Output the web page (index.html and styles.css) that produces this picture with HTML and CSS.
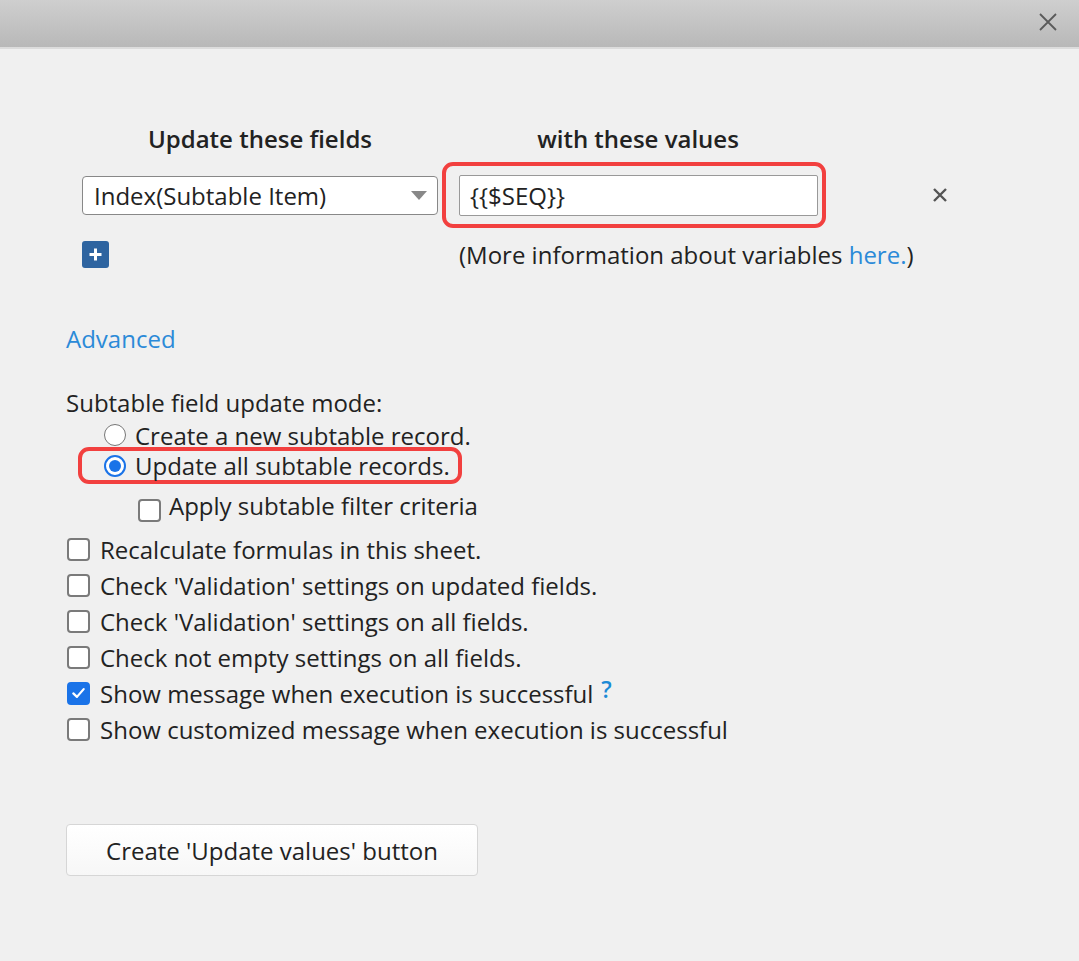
FILE: index.html
```html
<!DOCTYPE html>
<html>
<head>
<meta charset="utf-8">
<link rel="stylesheet" href="styles.css">
</head>
<body>
<div class="titlebar">
  <svg class="close" width="22" height="22" viewBox="0 0 22 22"><path d="M3 3 L19 19 M19 3 L3 19" stroke="#5a5a5a" stroke-width="1.8" fill="none"/></svg>
</div>
<div class="content">
  <div class="fields">
    <div class="heads">
      <div class="head-left">Update these fields</div>
      <div class="head-right">with these values</div>
    </div>
    <div class="row">
      <div class="select">
        <span>Index(Subtable Item)</span>
        <span class="arrow"></span>
      </div>
      <div class="highlight value-box">
        <div class="input">{{$SEQ}}</div>
      </div>
      <svg class="remove" width="16" height="16" viewBox="0 0 16 16"><path d="M2 2 L14 14 M14 2 L2 14" stroke="#555" stroke-width="2.4" fill="none"/></svg>
    </div>
    <div class="row2">
      <div class="plus"><svg width="27" height="27" viewBox="0 0 27 27"><path d="M13.5 7.5 V19.5 M7.5 13.5 H19.5" stroke="#fff" stroke-width="3" fill="none"/></svg></div>
      <div class="info">(More information about variables <span class="link">here.</span>)</div>
    </div>
  </div>

  <div class="advanced link">Advanced</div>

  <div class="mode-label">Subtable field update mode:</div>
  <div class="radios">
    <div class="opt radio-row first"><span class="radio"></span>Create a new subtable record.</div>
    <div class="highlight radio-hl"><div class="opt radio-row"><span class="radio on"></span>Update all subtable records.</div></div>
    <div class="opt sub-row"><span class="cb"></span>Apply subtable filter criteria</div>
  </div>

  <div class="checks">
    <div class="opt cb-row"><span class="cb"></span>Recalculate formulas in this sheet.</div>
    <div class="opt cb-row"><span class="cb"></span>Check 'Validation' settings on updated fields.</div>
    <div class="opt cb-row"><span class="cb"></span>Check 'Validation' settings on all fields.</div>
    <div class="opt cb-row"><span class="cb"></span>Check not empty settings on all fields.</div>
    <div class="opt cb-row"><span class="cb on"><svg width="22" height="22" viewBox="0 0 22 22"><path d="M5 11.5 L9.2 15.5 L17 6.5" stroke="#fff" stroke-width="2.6" fill="none" stroke-linecap="round" stroke-linejoin="round"/></svg></span>Show message when execution is successful<span class="help">?</span></div>
    <div class="opt cb-row"><span class="cb"></span>Show customized message when execution is successful</div>
  </div>

  <div class="btn">Create 'Update values' button</div>
</div>
</body>
</html>
```
FILE: styles.css
```css
html, body {
  margin: 0;
  padding: 0;
}
body {
  background: #f0f0f0;
  font-family: "Open Sans", "Noto Sans", sans-serif;
  font-size: 24px;
  color: #222;
  width: 1079px;
  height: 961px;
  overflow: hidden;
}
.titlebar {
  height: 47px;
  background: linear-gradient(#cfcfcf, #b8b8b8);
  border-bottom: 2px solid #dcdcdc;
  display: flex;
  justify-content: flex-end;
  align-items: center;
  padding-right: 20px;
}
.close {
  margin-top: -4px;
}
.content {
  padding-left: 66px;
}
.fields {
  padding-left: 16px;
  padding-top: 71px;
}
.heads {
  display: flex;
  font-weight: 600;
  height: 38px;
  line-height: 38px;
}
.head-left {
  width: 356px;
  text-align: center;
}
.head-right {
  width: 392px;
  text-align: center;
  padding-left: 4px;
}
.row {
  display: flex;
  align-items: center;
  margin-top: 4px;
}
.select {
  width: 356px;
  height: 39px;
  box-sizing: border-box;
  border: 1px solid #888;
  border-radius: 4px;
  background: #fff;
  display: flex;
  align-items: center;
  justify-content: space-between;
  padding: 0 10px 0 11px;
}
.arrow {
  width: 0;
  height: 0;
  border-left: 8px solid transparent;
  border-right: 8px solid transparent;
  border-top: 9px solid #888;
}
.highlight {
  border: 4px solid #f2403f;
  border-radius: 11px;
  box-sizing: border-box;
}
.value-box {
  margin-left: 4px;
  width: 384px;
  height: 66px;
  display: flex;
  align-items: center;
  padding-left: 13px;
}
.input {
  width: 359px;
  height: 41px;
  box-sizing: border-box;
  border: 1px solid #999;
  border-radius: 2px;
  background: #fff;
  line-height: 39px;
  padding-left: 10px;
}
.remove {
  margin-left: 106px;
}
.row2 {
  display: flex;
  align-items: center;
  height: 33px;
  margin-top: 10px;
}
.plus {
  width: 27px;
  height: 27px;
  background: #2e64a0;
  border-radius: 3px;
}
.plus svg {
  display: block;
}
.info {
  margin-left: 350px;
}
.link {
  color: #2b8ad8;
}
.advanced {
  margin-top: 52px;
  line-height: 32px;
}
.mode-label {
  margin-top: 28px;
  line-height: 40px;
}
.opt {
  display: flex;
  align-items: center;
  white-space: nowrap;
}
.radios {
  padding-left: 12px;
}
.radio-row {
  height: 31px;
  padding-left: 26px;
}
.radio-row.first {
  height: 24px;
}
.radio {
  width: 22px;
  height: 22px;
  box-sizing: border-box;
  border: 1.5px solid #777;
  border-radius: 50%;
  background: #fff;
  margin-right: 9px;
  position: relative;
  flex: none;
}
.radio.on {
  border: 2px solid #1a73e8;
}
.radio.on::after {
  content: "";
  position: absolute;
  left: 3px;
  top: 3px;
  width: 12px;
  height: 12px;
  border-radius: 50%;
  background: #1a73e8;
}
.radio-hl {
  width: 384px;
  height: 37px;
  display: flex;
  align-items: center;
}
.radio-hl .radio-row {
  padding-left: 22px;
}
.sub-row {
  height: 42px;
  padding-left: 60px;
}
.sub-row .cb {
  margin-top: 10px;
  margin-right: 8px;
}
.cb {
  width: 23px;
  height: 23px;
  box-sizing: border-box;
  border: 2px solid #7a7a7a;
  border-radius: 4px;
  background: #fff;
  margin-right: 10px;
  flex: none;
  display: flex;
  align-items: center;
  justify-content: center;
}
.cb.on {
  background: #1a73e8;
  border-color: #1a73e8;
}
.cb.on svg {
  display: block;
}
.checks {
  margin-top: 5px;
}
.cb-row {
  height: 36px;
  padding-left: 1px;
}
.help {
  color: #1b8ad6;
  margin-left: 8px;
  margin-top: -8px;
  font-size: 23px;
  font-weight: 600;
}
.btn {
  margin-top: 77px;
  width: 412px;
  height: 52px;
  box-sizing: border-box;
  border: 1px solid #d6d6d6;
  border-radius: 4px;
  background: linear-gradient(#ffffff, #f7f7f7);
  display: flex;
  align-items: center;
  justify-content: center;
}
```
